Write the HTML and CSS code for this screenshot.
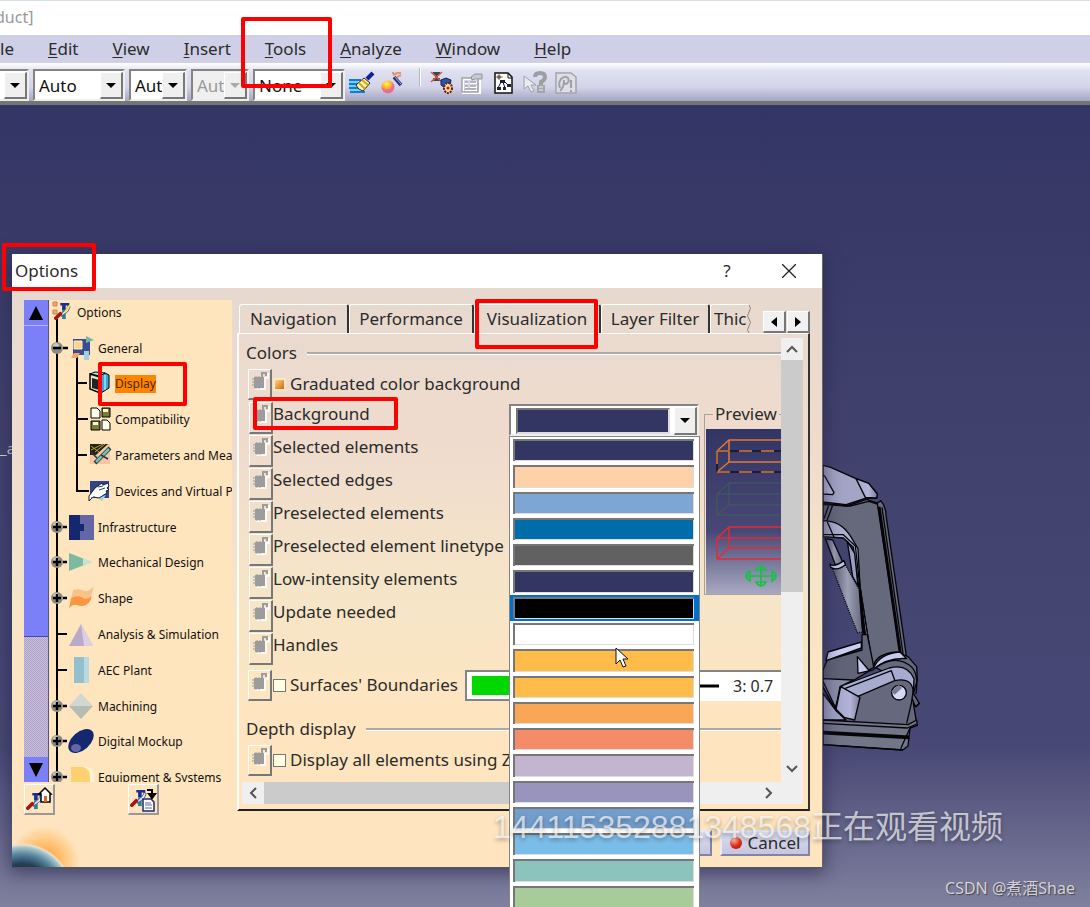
FILE: index.html
```html
<!DOCTYPE html>
<html lang="en">
<head>
<meta charset="utf-8">
<title>Product - Options</title>
<link rel="stylesheet" href="styles.css">
</head>
<body>
<svg class="defs" aria-hidden="true">
  <symbol id="lock" viewBox="0 0 20 20">
    <path d="M16 8v11H6M19 3v5h-4" fill="none" stroke="#fff" stroke-width="1.500"/>
    <path d="M5 7h7V2h6v4h-2V4h-2v3h1v11H5z" fill="#9c9c9c"/>
    <path d="M3 9h2M3 12h2M3 15h2M7 6v1M10 6v1M7 18v1M10 18v1" stroke="#9c9c9c"/>
  </symbol>
  <symbol id="knob" viewBox="0 0 12 12">
    <circle cx="6" cy="6" r="6" fill="#8d8a86"/><circle cx="5" cy="4" r="3" fill="#c9c6c0"/>
  </symbol>
  <symbol id="plus" viewBox="0 0 16 12">
    <use href="#knob" width="12" height="12"/><path d="M2 6h8M12 6h4M6 2v8" stroke="#000" stroke-width="2.400"/>
  </symbol>
  <symbol id="tools" viewBox="0 0 20 20">
    <path d="M7 1h10v4h-2V4h-2v5H9V4H7z" fill="#1c2f8f"/><path d="M9 9h4v10H9z" fill="#188a8c"/>
    <path d="M18 5l-2 5-4 3-4 3 1-4 4-3 3-5z" fill="#e7e8f4" stroke="#333a80" stroke-width=".8"/>
    <path d="M7 13L2 18" stroke="#a31616" stroke-width="4" stroke-linecap="round"/>
  </symbol>
</svg>
<div class="app">
  <header class="titlebar">duct]</header>
  <nav class="menubar">
    <button>le</button>
    <button><u>E</u>dit</button>
    <button><u>V</u>iew</button>
    <button><u>I</u>nsert</button>
    <button><u>T</u>ools</button>
    <button><u>A</u>nalyze</button>
    <button><u>W</u>indow</button>
    <button><u>H</u>elp</button>
  </nav>
  <div class="toolbar">
    <span class="combo combo-cut"><select aria-label="Color"><option></option></select><i></i></span>
    <span class="combo combo-wide"><select aria-label="Transparency"><option>Auto</option></select><i></i></span>
    <span class="combo combo-slim"><select aria-label="Weight"><option>Aut</option></select><i></i></span>
    <span class="combo combo-slim combo-off"><select aria-label="Line type" disabled><option>Aut</option></select><i></i></span>
    <span class="combo combo-wide"><select aria-label="Layer"><option>None</option></select><i></i></span>
    <div class="tools">
      <button aria-label="Painter"><svg viewBox="0 0 26 24"><path d="M0 9h12M0 13h11M0 17h14M1 21h15" stroke="#1679d8" stroke-width="2"/><path d="M0 11h9M0 15h9M1 19h13" stroke="#6fd3f5" stroke-width="2"/><path d="M7 14l8-7 6 5-7 8q-5-1-7-6z" fill="#fff3b5" stroke="#222"/><path d="M10 12l6 6M13 9l6 5" stroke="#d9a400" stroke-width="2"/><path d="M18 8l6-6" stroke="#111f9e" stroke-width="4"/></svg></button>
      <button aria-label="Wizard"><svg viewBox="0 0 26 24"><defs><radialGradient id="ball" cx=".4" cy=".25"><stop offset="0" stop-color="#fff36b"/><stop offset=".7" stop-color="#ffb21c"/><stop offset="1" stop-color="#e86b9a"/></radialGradient></defs><circle cx="8" cy="16" r="6.500" fill="url(#ball)"/><path d="M14 6l7 8" stroke="#27367c" stroke-width="3.500"/><path d="M14 5l7 8" stroke="#a2b0e8"/><path d="M13 4l4-2 4 0M17 6l4-2M12 2h2" stroke="#e39768" stroke-width="2"/></svg></button>
      <span class="divider"></span>
      <button aria-label="Update"><svg viewBox="0 0 26 24"><path d="M4 1h7v3H9v3h2v3H4V7h2V4H4z" fill="#2b4c59"/><path d="M2 1l11 10M13 1L2 11" stroke="#d9593c" stroke-width="1.600"/><path d="M12 9l5-2 5 2-1 6-5 2-4-3z" fill="#2855aa" stroke="#142553"/><ellipse cx="19" cy="17" rx="4" ry="5" fill="#ffd99b" stroke="#6b1a10" stroke-width="2" stroke-dasharray="2 1"/><circle cx="19" cy="17" r="1.500" fill="#a92119"/></svg></button>
      <button aria-label="Properties" disabled><svg viewBox="0 0 26 24"><path d="M3 8h17v14H3zM5 12h3M10 12h7M5 16h3M10 16h7M5 19h12" fill="none" stroke="#fff" stroke-width="2"/><path d="M2 7h16v14H2zM5 11h3M10 11h6M5 15h3M10 15h6M5 18h11" fill="none" stroke="#a3a3ad" stroke-width="1.500"/><path d="M11 6l4-3h7v5h-7l-3 1z" fill="#c8c8d0" stroke="#92929c"/></svg></button>
      <button aria-label="Product graph"><svg viewBox="0 0 26 24"><path d="M4 2h13l4 4v16H4z" fill="#fff" stroke="#111" stroke-width="1.500"/><path d="M17 2v5h4" fill="none" stroke="#111"/><path d="M7 17l3-6M12 11l2 6M13 10l5 5" stroke="#10152e"/><path d="M9 9h5v3H9zM6 16h4v3H6zM12 16h3v3h-3zM16 13h4v3h-4z" fill="#1d2134"/><path d="M5 6h7M8 3v6" stroke="#f2c126" stroke-width="2"/><circle cx="8" cy="6" r="2" fill="#5360c7"/></svg></button>
      <button aria-label="What is this" disabled><svg viewBox="0 0 26 24"><path d="M2 5l12 9H9l3 6-3 1-3-6-4 3z" fill="#e9e9f1" stroke="#a0a0a8"/><path d="M13 6q0-4 5-4t5 4q0 3-4 5v3" fill="none" stroke="#9d9da5" stroke-width="4"/><path d="M15 14h8v8h-8z" fill="#a5a5ad"/><path d="M17 16h4M17 19h4" stroke="#eee"/></svg></button>
      <button aria-label="Page help" disabled><svg viewBox="0 0 26 24"><path d="M3 2h15l5 4v16H3z" fill="#dedee7" stroke="#a4a4ac" stroke-width="1.500"/><path d="M7 17q-2-5 1-9 4-4 7-1 2 4-2 6-3 0-2-4M11 10q0 6-4 10M18 9v8M18 19v2" fill="none" stroke="#a0a0a8" stroke-width="2"/></svg></button>
    </div>
  </div>

  <main class="viewport">
    <span class="axis-label">_a</span>
    <svg class="excavator" viewBox="69 69 300 870" stroke="#050508" stroke-width="4" stroke-linejoin="round">
      <defs><linearGradient id="cyl"><stop offset="0" stop-color="#55556f"/><stop offset=".5" stop-color="#9ea1b5"/><stop offset="1" stop-color="#62657a"/></linearGradient>
      <linearGradient id="metal"><stop offset="0" stop-color="#a6a9c9"/><stop offset=".6" stop-color="#b2b4d8"/><stop offset="1" stop-color="#7b7d98"/></linearGradient></defs>
      <path d="M69 190L140 198 200 178 238 192 252 240 316 650 290 640 218 682 180 440 172 330 140 280 69 245z" fill="#66697c"/>
      <path d="M69 76L92 82 168 116 206 130 232 162 230 174 200 174 138 194 69 186z" fill="#a3a5c6"/>
      <path d="M168 116L206 130 232 162 230 174 196 172z" fill="url(#metal)"/>
      <path d="M69 106L74 108 102 158 98 164 69 162z" fill="#b9bbdd"/>
      <path d="M69 194L150 198 206 184 232 192M86 196L72 236M98 196L80 244" fill="none"/>
      <path d="M69 243Q118 240 150 286L174 326 180 440 218 682 208 672 160 322 130 294 69 290z" fill="url(#metal)"/>
      <path d="M69 284L130 284 166 318 206 676M82 246l20 46" fill="none"/>
      <path d="M142 304L164 340 174 440 158 410z" fill="#9b9dc3"/>
      <path d="M76 296L98 300 130 370 106 374z" fill="url(#cyl)"/>
      <path d="M96 382L136 374 178 450 190 576 172 578z" fill="url(#cyl)" stroke-dasharray="3 3"/>
      <path d="M90 372Q100 384 132 362L136 374Q112 394 92 382z" fill="#c2c4e8"/>
      <path d="M232 190L242 182Q258 200 258 226L318 640 318 652 302 648z" fill="#696b80"/>
      <path d="M237 200L302 648" stroke-width="9" fill="none"/><path d="M246 202L310 648" fill="none"/>
      <path d="M180 450L188 560 206 660" stroke-width="8" fill="none"/>
      <path d="M69 690L82 660 186 630 186 584 202 584 222 684 130 740 69 716z" fill="#616477"/>
      <path d="M78 662L84 636 184 606 184 624z" fill="#cbcdf1"/>
      <path d="M69 716L160 720 120 740 106 812 69 740z" fill="#8b8da9"/>
      <path d="M69 724L106 802 126 740M69 742L108 812" fill="none"/>
      <path d="M220 678Q230 640 290 636L324 650 350 680 352 720 340 760 358 790 348 800 340 790 350 850 322 862 69 850 69 762 106 812 130 744 168 768 258 700z" fill="#66697e"/>
      <path d="M172 650L206 690 222 682Q240 640 300 636L320 656Q260 652 218 690L174 700z" fill="#c6c9ee"/>
      <path d="M124 738L268 684Q322 670 342 716L340 756Q336 710 284 722L172 770 134 752z" fill="#a8abd0"/>
      <path d="M134 746L274 692 284 720" fill="none"/>
      <path d="M122 740L180 772 164 840 132 832 108 808z" fill="url(#metal)"/>
      <path d="M69 760L108 812 138 840 69 840z" fill="#a3a5c6"/>
      <path d="M228 682Q290 640 336 682Q356 704 348 762" fill="none"/>
      <circle cx="297" cy="758" r="22" fill="#d7d8f7"/>
      <path d="M274 754L296 734l10 10-22 20z" fill="#777a90" stroke="none"/>
      <path d="M340 750L334 790 320 850M358 790l-12 10-10-26" fill="none"/>
      <path d="M69 840L324 854 350 840 352 856 330 864 324 918 308 930 69 914z" fill="#737588"/>
      <path d="M69 850L322 864 350 852" fill="none"/>
      <path d="M69 878L328 892" stroke-width="11" fill="none"/><path d="M330 864L302 926M69 914L308 930" fill="none"/>
    </svg>
    <p class="credit">CSDN @煮酒Shae</p>
  </main>

  <section class="dialog" role="dialog" aria-labelledby="dialog-title">
    <header class="dialog-bar">
      <h1 id="dialog-title">Options</h1>
      <button aria-label="Help">?</button>
      <button aria-label="Close"><svg viewBox="0 0 14 14" width="14" height="14"><path d="M0 0l14 14M14 0L0 14" stroke="#222" stroke-width="1.300"/></svg></button>
    </header>
    <div class="dialog-body">
      <div class="side">
        <div class="tree-pane">
          <div class="tree-scroll">
            <button aria-label="Scroll up"><svg viewBox="0 0 14 14"><path d="M7 0l7 14H0z"/></svg></button>
            <span class="tree-thumb"></span>
            <span class="tree-track"></span>
            <button aria-label="Scroll down"><svg viewBox="0 0 14 14"><path d="M7 14L0 0h14z"/></svg></button>
          </div>
          <ul class="tree">
            <li class="lv0"><svg viewBox="0 0 28 36"><path d="M8 24v14" stroke="#000" stroke-width="2"/><g fill="#f0a868" stroke="#c98455"><path d="M4 7h4v4H4zM4 15h4v4H4z"/></g><use href="#tools" x="5" y="6" width="18" height="20"/><path d="M21 10l-5 7" stroke="#f3e04d" stroke-width="2"/></svg>Options</li>
            <li class="lv1"><svg viewBox="0 0 49 36"><path d="M8 0v38M28 24v14" stroke="#000" stroke-width="2"/><use href="#knob" x="2" y="11" width="12" height="12"/><path d="M4 17h8M14 17h5" stroke="#000" stroke-width="2.400"/><path d="M24 8h17v16H24z" fill="#3b4b90"/><path d="M25 10h8v8h-8z" fill="#ffd489" stroke="#f9eed3"/><path d="M37 5l8 4-8 3z" fill="#77b79f"/><path d="M22 27l3-5h6l-3 5z" fill="#f3a468"/><path d="M35 20h5v9h-5z" fill="#9fd0dc"/></svg>General</li>
            <li class="lv2"><svg viewBox="0 0 66 36"><path d="M8 0v38M28 0v38M28 17h10" stroke="#000" stroke-width="2"/><path d="M48 10l8-3 4 2v13l-8 5z" fill="#39a6dc" stroke="#000"/><path d="M41 8l5-2 10 1-5 3z" fill="#a4e2f7" stroke="#000"/><path d="M41 8l10 3v16l-10-4z" fill="#e8e2c8" stroke="#000" stroke-width="1.500"/><path d="M43 12l7 2v10l-7-2z" fill="#222"/><path d="M56 9v15" stroke="#a4e2f7" stroke-width="1.500"/></svg><mark>Display</mark></li>
            <li class="lv2"><svg viewBox="0 0 66 36"><path d="M8 0v38M28 0v38M28 17h11" stroke="#000" stroke-width="2"/><g stroke="#000"><path d="M42 6h6l3 3v7h-9zM53 18h5l3 3v7h-8z" fill="#fffde9"/><path d="M53 6h8v9h-8zM42 19h9v9h-9z" fill="#7b7b3b"/></g><path d="M54 7h5v3h-5zM44 20h5v3h-5z" fill="#f5f3d0"/></svg>Compatibility</li>
            <li class="lv2"><svg viewBox="0 0 66 36"><path d="M8 0v38M28 0v38M28 17h10" stroke="#000" stroke-width="2"/><path d="M41 6h20v20H41z" fill="#f8c5a3"/><path d="M41 6h18L47 17h-6z" fill="#22211e"/><path d="M42 12l12-6M46 14l10-8M42 8l8 6" stroke="#b8a52d"/><path d="M46 25l15-15" stroke="#333" stroke-width="4"/><path d="M47 24l13-13" stroke="#67c7c2" stroke-width="2.500"/><path d="M42 14l6 6M52 17l7 4" stroke="#333" stroke-width="1.500"/></svg>Parameters and Mea</li>
            <li class="lv2"><svg viewBox="0 0 66 36"><path d="M8 0v38M28 0v17h12" fill="none" stroke="#000" stroke-width="2"/><path d="M41 7h19v17H41z" fill="#334489"/><path d="M48 23l9-2-4 6z" fill="#98d8da"/><path d="M40 22l6-8 7-5 1 2 5-2 1 3-2 2 2 2-3 1 1 2-8 5-6-1-4 4z" fill="#fff" stroke="#111c3c"/><path d="M49 13l5-1M50 16l6-2M42 24l4-1" stroke="#31407d"/></svg>Devices and Virtual P</li>
            <li class="lv1"><svg viewBox="0 0 49 36"><path d="M8 0v38" stroke="#000" stroke-width="2"/><use href="#plus" x="2" y="11" width="16" height="12"/><path d="M20 5h25v25H20z" fill="#6567a4"/><path d="M20 5h11v9h4v7h-4v9H20z" fill="#15286f"/></svg>Infrastructure</li>
            <li class="lv1"><svg viewBox="0 0 49 36"><path d="M8 0v38" stroke="#000" stroke-width="2"/><use href="#plus" x="2" y="11" width="16" height="12"/><path d="M20 8l23 9-23 9z" fill="#7dbaa1"/><path d="M34 13l10 4-10 4z" fill="#c8e2d2"/></svg>Mechanical Design</li>
            <li class="lv1"><svg viewBox="0 0 49 36"><path d="M8 0v38" stroke="#000" stroke-width="2"/><use href="#plus" x="2" y="11" width="16" height="12"/><path d="M24 9q6-2 12 1 5 0 9-5-2 6-3 11-8 9-20 3z" fill="#fac28b"/><path d="M22 17q8-4 14 1 4 0 7-3-3 13-15 9-5-1-8 4z" fill="#fa9540"/></svg>Shape</li>
            <li class="lv1"><svg viewBox="0 0 49 36"><path d="M8 0v38M8 17h10" stroke="#000" stroke-width="2"/><path d="M32 7l12 22H20z" fill="#b9aaca"/><path d="M32 7l12 22h-9z" fill="#dad0df"/></svg>Analysis &amp; Simulation</li>
            <li class="lv1"><svg viewBox="0 0 49 36"><path d="M8 0v38M8 17h10" stroke="#000" stroke-width="2"/><path d="M25 4h15v26H25z" fill="#93bfce"/><path d="M35 4h5v26h-5z" fill="#bad9df"/></svg>AEC Plant</li>
            <li class="lv1"><svg viewBox="0 0 49 36"><path d="M8 0v38" stroke="#000" stroke-width="2"/><use href="#plus" x="2" y="11" width="16" height="12"/><path d="M32 4l12 13H20z" fill="#d4d6d1"/><path d="M20 17h24L32 30z" fill="#b6bbb4"/></svg>Machining</li>
            <li class="lv1"><svg viewBox="0 0 49 36"><path d="M8 0v38" stroke="#000" stroke-width="2"/><use href="#plus" x="2" y="11" width="16" height="12"/><ellipse cx="32" cy="17" rx="15" ry="9" transform="rotate(-42 32 17)" fill="#15286f"/><ellipse cx="27" cy="24" rx="5" ry="4" fill="#6567a4"/></svg>Digital Mockup</li>
            <li class="lv1"><svg viewBox="0 0 49 36"><path d="M8 0v16" stroke="#000" stroke-width="2"/><use href="#plus" x="2" y="11" width="16" height="12"/><path d="M36 7q9-1 9 10v10h-9z" fill="#fff2d4"/><path d="M22 7h12q7 2 7 10v10H22z" fill="#ffd070"/></svg>Equipment &amp; Systems</li>
          </ul>
        </div>
        <div class="side-buttons">
          <button aria-label="Reset values"><svg viewBox="0 0 28 28"><use href="#tools" x="1" y="6" width="18" height="20"/><path d="M14 9l6-6 6 6h-1v8h-9V9z" fill="#fff" stroke="#000" stroke-width="1.500"/><path d="M19 11h3v6h-3z" fill="#d56a28"/></svg></button>
          <button aria-label="Dump parameters"><svg viewBox="0 0 28 28"><use href="#tools" x="1" y="3" width="18" height="20"/><path d="M14 14h8l3 3v9H14z" fill="#fff" stroke="#202a6a" stroke-width="1.500"/><path d="M16 18h6M16 20h7M16 23h7" stroke="#5661bb"/><path d="M18 5h5v6M20 9l3 4 3-4z" fill="none" stroke="#000" stroke-width="2"/></svg></button>
        </div>
      </div>

      <div class="content">
        <div class="tabs" role="tablist">
          <button role="tab">Navigation</button>
          <button role="tab">Performance</button>
          <button role="tab" aria-selected="true">Visualization</button>
          <button role="tab">Layer Filter</button>
          <button role="tab" class="tab-cut">Thic<svg viewBox="0 0 4 28"><path d="M2 0q3 3 0 7t0 7 0 7 0 7" fill="none" stroke="#8c8480"/></svg></button>
          <span class="tab-arrows"><button aria-label="Previous tab"><svg viewBox="0 0 6 10"><path d="M6 0v10L0 5z"/></svg></button><button aria-label="Next tab"><svg viewBox="0 0 6 10"><path d="M0 0v10l6-5z"/></svg></button></span>
        </div>
        <div class="panel">
          <div class="sheet">
            <h2>Colors</h2>
            <div class="check-row"><button class="lock" aria-label="Lock"><svg><use href="#lock"/></svg></button><input type="checkbox" id="grad" checked><label for="grad">Graduated color background</label></div>
            <div class="color-area">
              <div class="rows">
                <div><button class="lock" aria-label="Lock"><svg><use href="#lock"/></svg></button><label for="bg">Background</label></div>
                <div><button class="lock" aria-label="Lock"><svg><use href="#lock"/></svg></button>Selected elements</div>
                <div><button class="lock" aria-label="Lock"><svg><use href="#lock"/></svg></button>Selected edges</div>
                <div><button class="lock" aria-label="Lock"><svg><use href="#lock"/></svg></button>Preselected elements</div>
                <div><button class="lock" aria-label="Lock"><svg><use href="#lock"/></svg></button>Preselected element linetype</div>
                <div><button class="lock" aria-label="Lock"><svg><use href="#lock"/></svg></button>Low-intensity elements</div>
                <div><button class="lock" aria-label="Lock"><svg><use href="#lock"/></svg></button>Update needed</div>
                <div><button class="lock" aria-label="Lock"><svg><use href="#lock"/></svg></button>Handles</div>
              </div>
              <span class="combo swatch-combo"><select id="bg"><option></option></select><i></i></span>
              <fieldset class="preview">
                <legend>Preview</legend>
                <svg viewBox="0 0 100 165" fill="none">
                  <g stroke="#e27a35" stroke-width="1.500"><path d="M11 22L23 11h90M23 11v22h90M11 43l12-10"/><path d="M11 22h100M11 43h100M11 22v21" stroke="#12122a"/><path d="M11 22h100M11 43h100M11 22v21" stroke-dasharray="13 9"/></g>
                  <path d="M11 65L23 54h90M23 54v22h90M11 86l12-10M11 65h100M11 86h100M11 65v21" stroke="#3f6059"/>
                  <path d="M11 109L23 98h90M23 98v21h90M11 130l12-11M11 109h100M11 130h100M11 109v21" stroke="#e02c35" stroke-width="1.500"/>
                  <path d="M40 147h30M55 138v18M50 141q5-8 10 0zM50 153q5 8 10 0zM44 142q-8 5 0 10zM66 142q8 5 0 10z" stroke="#12c53c" stroke-width="1.600"/>
                </svg>
              </fieldset>
            </div>
            <div class="check-row surface-row"><button class="lock" aria-label="Lock"><svg><use href="#lock"/></svg></button><input type="checkbox" id="surf"><label for="surf">Surfaces' Boundaries</label>
              <select class="green" aria-label="Boundary color"><option></option></select>
              <span class="weight"><svg viewBox="0 0 40 4"><path d="M0 2h40" stroke="#000" stroke-width="3"/></svg><select aria-label="Boundary weight"><option>3: 0.7</option></select></span>
            </div>
            <h2 class="depth">Depth display</h2>
            <div class="check-row"><button class="lock" aria-label="Lock"><svg><use href="#lock"/></svg></button><input type="checkbox" id="zbuf"><label for="zbuf">Display all elements using Z</label></div>
          </div>
          <div class="vbar"><button aria-label="Up"><svg viewBox="0 0 12 8"><path d="M1 7l5-5 5 5"/></svg></button><span></span><button aria-label="Down"><svg viewBox="0 0 12 8"><path d="M1 1l5 5 5-5"/></svg></button></div>
          <div class="hbar"><button aria-label="Left"><svg viewBox="0 0 8 12"><path d="M7 1L2 6l5 5"/></svg></button><span></span><button aria-label="Right"><svg viewBox="0 0 8 12"><path d="M1 1l5 5-5 5"/></svg></button></div>
        </div>
      </div>
      <footer class="dialog-foot"><button aria-label="OK"></button><button><i></i>Cancel</button></footer>
    </div>
  </section>

  <ul class="palette" role="listbox" aria-label="Background colors">
    <li class="c-navy"></li><li class="c-peach"></li><li class="c-sky"></li><li class="c-blue"></li><li class="c-gray"></li><li class="c-navy"></li>
    <li class="c-black current"></li><li class="c-white"></li><li class="c-amber"></li><li class="c-amber"></li><li class="c-orange"></li><li class="c-coral"></li>
    <li class="c-lilac"></li><li class="c-violet"></li><li class="c-steel"></li><li class="c-azure"></li><li class="c-teal"></li><li class="c-green"></li>
  </ul>
  <svg class="cursor" viewBox="0 0 13 21"><path d="M1 1v16l4-4 3 7 3-1-3-7h5z" fill="#fff" stroke="#111"/></svg>

  <span class="mark mark-tools"></span>
  <span class="mark mark-options"></span>
  <span class="mark mark-display"></span>
  <span class="mark mark-visual"></span>
  <span class="mark mark-back"></span>
  <p class="viewer">144115352881348568正在观看视频</p>
</div>
</body>
</html>
```
FILE: styles.css
```css
* { box-sizing: border-box; }
body { margin: 0; font: 17px/24px "Noto Sans", "Noto Sans CJK SC", sans-serif; color: #2b2b2b; }
button, select, input { font: inherit; color: inherit; margin: 0; }
button { border: 0; padding: 0; background: none; }
ul, h1, h2, p { margin: 0; padding: 0; font-size: inherit; font-weight: 400; list-style: none; }
.defs { position: absolute; width: 0; height: 0; }
.app { position: relative; display: flex; flex-direction: column; height: 100vh; overflow: hidden; }

.titlebar { height: 35px; padding-top: 4px; border-top: 1px solid #d5e0e4; background: #fff; color: #999; font-size: 16px; text-indent: -5px; }
.menubar { display: flex; gap: 34px; height: 28px; align-items: center; background: #cfd0e7; }
.menubar u { text-underline-offset: 2px; }
.toolbar { display: flex; gap: 4px; height: 42px; padding-top: 6px; align-items: flex-start; background: linear-gradient(#fff 0, #dfe0f0 8px, #d3d4e9 24px, #a5a6c0); border-bottom: 4px solid #757575; }
.combo { display: grid; grid-template-columns: 1fr 23px; height: 32px; padding: 1px 0 0 1px; background: #fff; border: 2px solid #848484; border-right-color: #eee; border-bottom-color: #eee; }
.combo select { grid-area: 1 / 1 / 2 / 3; appearance: none; border: 0; border-radius: 0; padding: 0 3px; background: none; color: #111; line-height: 22px; opacity: 1; }
.combo i { grid-area: 1 / 2; display: grid; place-items: center; background: #efefef; border: 1px solid #fff; border-right: 2px solid #777; border-bottom: 2px solid #777; pointer-events: none; }
.combo i::after { content: ""; border: 5px solid transparent; border-top-color: #000; border-bottom: 0; }
.combo-cut { width: 29px; border-left: 0; }
.combo-wide { width: 92px; }
.combo-slim { width: 58px; }
.combo-off { background: #efefef; }
.combo-off select { color: #999; }
.combo-off i::after { border-top-color: #aaa; }
.tools { display: flex; gap: 5px; padding-top: 2px; }
.tools button, .tools svg { display: block; width: 26px; height: 24px; }
.divider { width: 2px; height: 18px; margin: -3px 3px 0 8px; background: #b5b6c8; border-right: 1px solid #fff; }

.viewport { position: relative; flex: 1; background: linear-gradient(#333564, #41416d 40%, #484876 80%, #80809e); }
.axis-label { position: absolute; left: 0; top: 331px; color: #ddd; font-size: 15px; }
.excavator { position: absolute; left: 823px; top: 358px; width: 100px; height: 290px; }
.credit { position: absolute; right: 15px; bottom: 7px; color: #d2d2dc; font-size: 16px; text-shadow: 1px 1px 1px #444; }

.dialog { position: absolute; left: 12px; top: 254px; width: 811px; background: linear-gradient(#e7d9cf 35px, #f0dccd 200px, #f5e5c8 330px, #ffe5bf 480px); border-right: 1px solid #666; border-bottom: 1px solid #555; box-shadow: 0 3px 16px 2px #24244a99; }
.dialog-bar { display: flex; align-items: center; height: 34px; padding: 0 26px 0 3px; background: #fff; }
.dialog-bar h1 { flex: 1; }
.dialog-bar button { display: grid; place-items: center; margin-left: 48px; min-width: 14px; }
.dialog-body { display: grid; grid-template-columns: 208px 1fr; column-gap: 5px; padding: 12px 12px 11px 12px; background: radial-gradient(circle at 10px 606px, #243c55 30px, #55889f 40px, #a9c6cc 47px, #e6e2cf 49px, transparent 51px) no-repeat, radial-gradient(circle at 32px 574px, #ff9e3c 4px, #ffc478 20px, transparent 36px) no-repeat; }
.tree-pane { display: grid; grid-template: 482px / 25px 1fr; height: 482px; overflow: hidden; background: #ffe5bd; }
.tree-scroll { display: grid; grid-template-rows: 25px 312px 1fr 25px; background: #7b80f8; border-right: 1px solid #555580; }
.tree-scroll button { display: grid; place-items: center; }
.tree-scroll svg { width: 14px; height: 14px; }
.tree-thumb { border-top: 1px solid #b9bbff; border-bottom: 1px solid #4449a0; }
.tree-track { background: repeating-conic-gradient(#aaa2d2 0 25%, #cdbfd2 0 50%) 0 0 / 2px 2px; }
.tree { display: grid; grid-auto-rows: 1fr; height: 501px; margin-top: -5px; overflow: hidden; font-size: 12px; color: #111; }
.tree li { display: flex; align-items: center; white-space: nowrap; min-height: 0; }
.tree svg { flex: none; height: 36px; overflow: visible; }
.lv0 svg { width: 28px; } .lv1 svg { width: 49px; } .lv2 svg { width: 66px; }
.tree mark { background: #ff8400; color: #4b2a00; line-height: 18px; }
.side-buttons { display: flex; gap: 73px; margin-top: 2px; }
.side-buttons button { width: 31px; height: 31px; border: 1px solid #fff; border-right: 2px solid #999; border-bottom: 2px solid #999; }
.side-buttons svg { display: block; width: 28px; height: 28px; }

.content { min-width: 0; padding-top: 4px; }
.tabs { display: grid; grid-template-columns: 110px 125px 127px 109px 40px 1fr; height: 29px; padding-left: 2px; }
.tabs > button { border-right: 2px solid #333; border-top: 1px solid #fff; border-left: 1px solid #fff; border-radius: 3px 3px 0 0; white-space: nowrap; }
.tabs .tab-cut { display: flex; align-items: center; border-right: 0; padding-left: 3px; }
.tab-cut svg { flex: none; width: 4px; height: 28px; }
.tab-arrows { display: flex; gap: 1px; justify-content: flex-end; align-items: end; }
.tab-arrows button { display: grid; place-items: center; width: 23px; height: 22px; background: #f1f1f1; border: 1px solid #fff; border-right: 2px solid #777; border-bottom: 2px solid #777; }
.tab-arrows svg { width: 6px; height: 10px; }
.panel { display: grid; grid-template-columns: minmax(0, 1fr) 22px; grid-template-rows: 444px 22px; padding: 4px 5px 5px 3px; border: 2px solid #fff; border-top-width: 1px; border-right-color: #333; border-bottom-color: #222; }
.sheet { overflow: hidden; white-space: nowrap; }
.sheet h2 { display: flex; align-items: center; gap: 10px; height: 30px; padding-left: 4px; }
.sheet h2::after { content: ""; flex: 1; height: 2px; background: #aaa; border-bottom: 1px solid #fff; }
.check-row { display: flex; align-items: center; height: 32px; padding-left: 6px; }
.lock { flex: none; display: grid; align-content: start; width: 24px; height: 31px; border: 1px solid #fff; border-right: 2px solid #777; border-bottom: 2px solid #777; }
.lock svg { display: block; width: 20px; height: 20px; }
.check-row input { appearance: none; flex: none; width: 13px; height: 13px; margin: 0 4px 0 1px; border: 1px solid #777; background: #ffffe1; }
.check-row input:checked { border: 2px solid #f7e9be; background: linear-gradient(135deg, #ffd18d, #d26a0c); }
.color-area { display: grid; grid-template-columns: 255px 190px 100px; column-gap: 5px; margin: 2px 0 0 7px; }
.rows > div { display: flex; align-items: flex-start; height: 33px; line-height: 24px; }
.rows .lock { height: 32px; }
.swatch-combo { margin-top: 2px; }
.color-area .swatch-combo select { margin: 1px 27px 1px 4px; background: #333563; border: 2px solid #777; border-right-color: #ddd; border-bottom-color: #ddd; }
.preview { min-width: 0; height: 193px; margin: 0; padding: 3px 0 0 1px; border: 1px solid #a9a19b; border-right: 0; }
.preview legend { margin-left: 7px; padding: 0 2px; }
.preview svg { display: block; width: 100px; height: 165px; background: linear-gradient(#333564, #484876 62%, #a9a9c2); }
.surface-row { height: 34px; margin-top: 2px; }
.surface-row label { width: 175px; }
.green { appearance: none; width: 130px; height: 31px; border: 2px solid #848484; border-radius: 0; background: #00d800 content-box; padding: 3px 5px; box-shadow: inset 0 0 0 4px #fff; }
.weight { display: flex; flex: 1; align-items: center; height: 31px; padding-left: 80px; margin-left: 4px; background: #fff; border-top: 2px solid #848484; font-size: 16px; }
.weight svg { flex: none; width: 40px; height: 4px; }
.weight select { appearance: none; flex: none; border: 0; padding: 0 0 0 14px; background: none; }
.sheet .depth { margin-top: 12px; }
.vbar, .hbar { display: grid; background: #efefef; }
.vbar { grid-template-rows: 22px 232px 1fr; }
.hbar { grid-column: 1 / 3; grid-template-columns: 22px 1fr 200px; padding-right: 22px; }
.vbar span, .hbar span { background: #cbcbcb; }
.vbar button, .hbar button { display: grid; place-items: center; }
.vbar button:last-child { align-self: end; height: 26px; }
.hbar button:last-child { justify-self: end; width: 24px; }
.vbar svg { width: 12px; height: 8px; } .hbar svg { width: 8px; height: 12px; }
.vbar path, .hbar path { fill: none; stroke: #555; stroke-width: 2; }
.dialog-foot { grid-column: 1 / 3; display: flex; justify-content: flex-end; gap: 8px; margin-top: 15px; }
.dialog-foot button { display: flex; align-items: center; justify-content: center; gap: 6px; width: 90px; height: 26px; background: linear-gradient(#dcdcf0, #c5c6df); border: 2px solid #e9e9f8; border-right-color: #8284a3; border-bottom-color: #8284a3; }
.dialog-foot i { width: 12px; height: 12px; border-radius: 6px; background: radial-gradient(circle at 4px 3px, #ffc0a8, #e0301c 50%, #951408); }

.palette { position: absolute; left: 509px; top: 436px; width: 191px; height: 475px; display: grid; grid-auto-rows: 1fr; border: 1px solid #848484; background: #fff; }
.palette li { border: solid #fff; border-width: 2px 5px 2px 3px; box-shadow: inset 2px 2px #777, inset -1px -1px #ddd; background-clip: padding-box; }
.palette .current { border-color: #0070d0; }
.c-navy { background: #333563; } .c-peach { background: #ffd1a8; } .c-sky { background: #7ea6d4; }
.c-blue { background: #006dab; } .c-gray { background: #616161; } .c-black { background: #000; }
.c-white { background: #fff; } .c-amber { background: #ffbc48; } .c-orange { background: #f9a656; }
.c-coral { background: #f48c67; } .c-lilac { background: #c3b5cf; } .c-violet { background: #9994bd; }
.c-steel { background: #739dcc; } .c-azure { background: #7abde9; } .c-teal { background: #8dc3bd; } .c-green { background: #a8cc99; }
.cursor { position: absolute; left: 615px; top: 647px; width: 13px; height: 21px; }

.mark { position: absolute; border: 4px solid #f00; border-radius: 2px; pointer-events: none; }
.mark-tools { left: 241px; top: 17px; width: 91px; height: 71px; }
.mark-options { left: 2px; top: 243px; width: 94px; height: 48px; }
.mark-display { left: 98px; top: 362px; width: 89px; height: 44px; }
.mark-visual { left: 475px; top: 299px; width: 123px; height: 50px; }
.mark-back { left: 253px; top: 397px; width: 145px; height: 33px; }
.viewer { position: absolute; left: 493px; top: 806px; font: 32px/42px "Liberation Sans", "Noto Sans CJK SC", sans-serif; color: #ffffffa8; white-space: nowrap; text-shadow: 0 2px 4px #0005; }
```
